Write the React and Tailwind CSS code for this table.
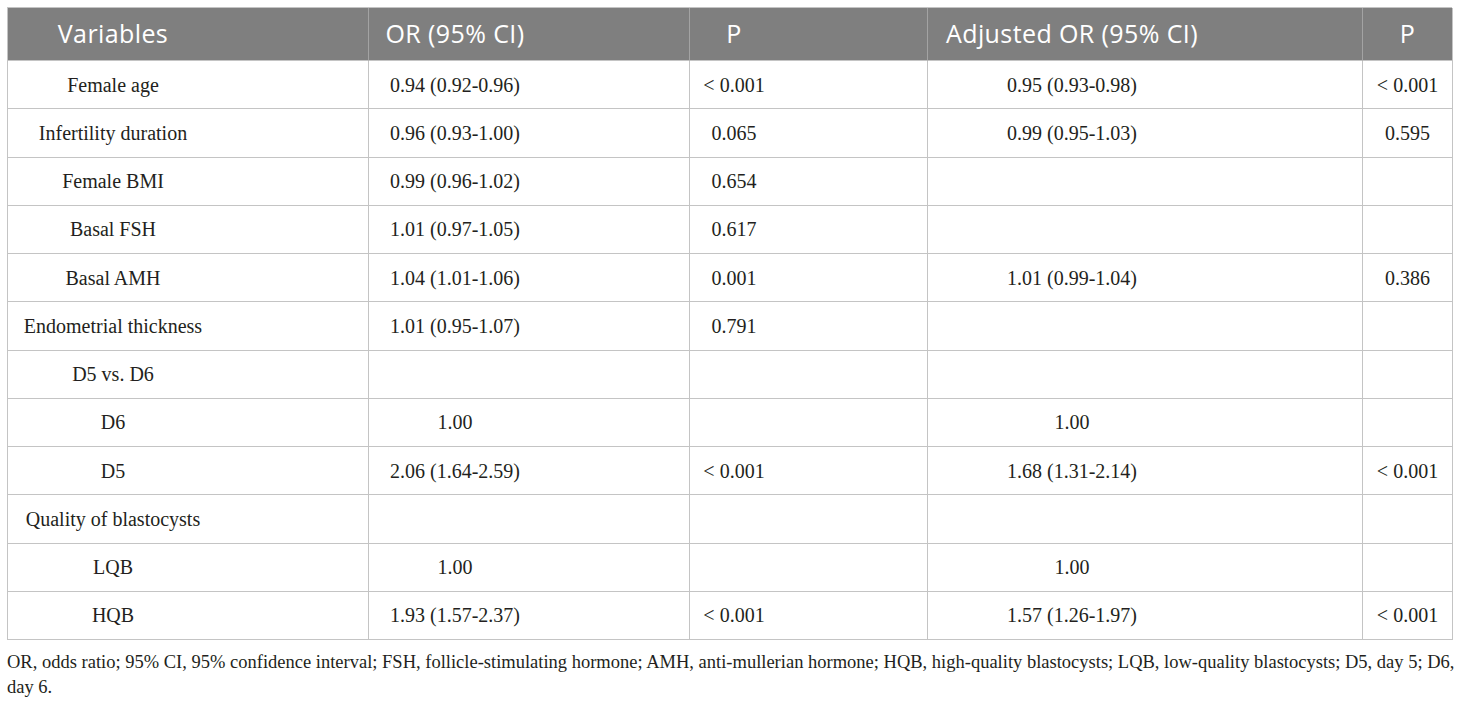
import React from "react";

const rows = [
  ["Female age", "0.94 (0.92-0.96)", "< 0.001", "0.95 (0.93-0.98)", "< 0.001"],
  ["Infertility duration", "0.96 (0.93-1.00)", "0.065", "0.99 (0.95-1.03)", "0.595"],
  ["Female BMI", "0.99 (0.96-1.02)", "0.654", "", ""],
  ["Basal FSH", "1.01 (0.97-1.05)", "0.617", "", ""],
  ["Basal AMH", "1.04 (1.01-1.06)", "0.001", "1.01 (0.99-1.04)", "0.386"],
  ["Endometrial thickness", "1.01 (0.95-1.07)", "0.791", "", ""],
  ["D5 vs. D6", "", "", "", ""],
  ["D6", "1.00", "", "1.00", ""],
  ["D5", "2.06 (1.64-2.59)", "< 0.001", "1.68 (1.31-2.14)", "< 0.001"],
  ["Quality of blastocysts", "", "", "", ""],
  ["LQB", "1.00", "", "1.00", ""],
  ["HQB", "1.93 (1.57-2.37)", "< 0.001", "1.57 (1.26-1.97)", "< 0.001"],
];

const colW = ["w-[361px]", "w-[321px]", "w-[238px]", "w-[435px]", "w-[90px]"];
const innerW = ["w-[210px]", "w-[172px]", "w-[88px]", "w-[288px]", "w-[89px]"];

const serif = { fontFamily: '"Liberation Serif", "Times New Roman", serif' };
const sans = { fontFamily: '"Open Sans", "Noto Sans", sans-serif' };

export default function App() {
  const headers = ["Variables", "OR (95% CI)", "P", "Adjusted OR (95% CI)", "P"];
  return (
    <div className="bg-white w-[1460px] h-[701px] pl-[7px] pt-[7px]">
      <div className="w-[1445px] border-l border-t border-[#c4c4c4]">
        <div className="flex h-[53px] bg-[#7f7f7f]">
          {headers.map((h, i) => (
            <div
              key={i}
              className={`${colW[i]} h-full flex items-center border-r border-b ${i === 4 ? "border-r-[#c4c4c4]" : "border-r-[#a3a3a3]"} border-b-[#c4c4c4] shrink-0`}
            >
              <div className={`${innerW[i]} text-center text-white text-[25px] tracking-[0.4px] leading-none pb-[1px] whitespace-nowrap`} style={sans}>
                {h}
              </div>
            </div>
          ))}
        </div>
        {rows.map((r, ri) => (
          <div key={ri} className="flex h-[48.25px]">
            {r.map((c, i) => (
              <div
                key={i}
                className={`${colW[i]} h-full flex items-center border-r border-b border-[#c4c4c4] shrink-0`}
              >
                <div
                  className={`${innerW[i]} text-center text-[#231f20] text-[20px] leading-none whitespace-pre`}
                  style={serif}
                >
                  {c}
                </div>
              </div>
            ))}
          </div>
        ))}
      </div>
      <div className="mt-[10px] text-[18.5px] leading-[25px] text-[#231f20]" style={serif}>
        <div className="whitespace-nowrap">
          OR, odds ratio; 95% CI, 95% confidence interval; FSH, follicle-stimulating hormone; AMH, anti-mullerian hormone; HQB, high-quality blastocysts; LQB, low-quality blastocysts; D5, day 5; D6,
        </div>
        <div>day 6.</div>
      </div>
    </div>
  );
}
